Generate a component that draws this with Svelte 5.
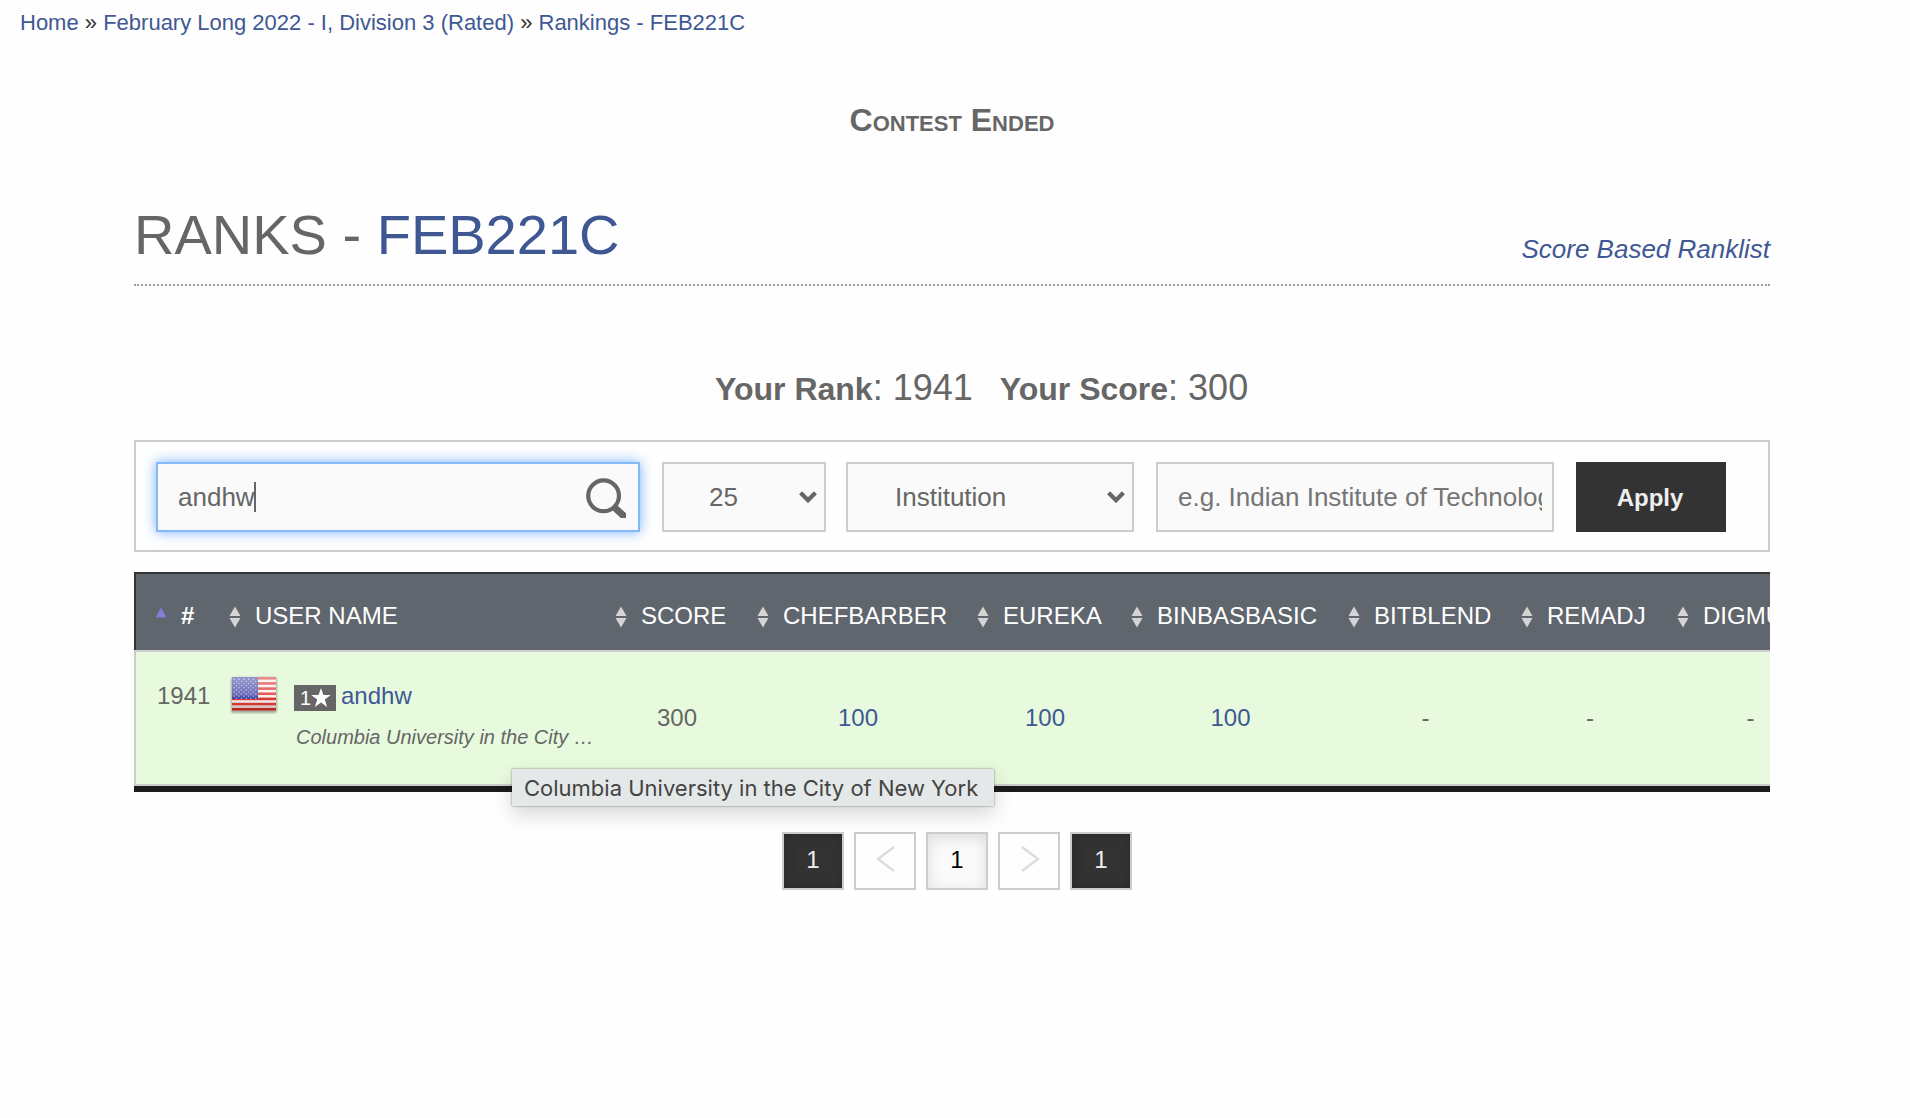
<script>
  const columns = [
    { name: 'SCORE', value: '300', link: false },
    { name: 'CHEFBARBER', value: '100', link: true },
    { name: 'EUREKA', value: '100', link: true },
    { name: 'BINBASBASIC', value: '100', link: true },
    { name: 'BITBLEND', value: '-', link: false },
    { name: 'REMADJ', value: '-', link: false },
    { name: 'DIGMULK', value: '-', link: false },
  ];
  const stripes = [0, 2, 4, 6, 8, 10, 12];
  const stars = Array.from({ length: 50 }, (_, i) => ({ x: 4.2 + (i % 10) * 2.4, y: 3.4 + Math.floor(i / 10) * 4.2 + (i % 2) * 2.1 }));
</script>

{#snippet sorter()}
  <svg class="sorter" width="12" height="22" viewBox="0 0 12 22">
    <path d="M6 0.5 11.5 10H.5ZM.5 12h11L6 21.5Z" fill="#d4d4d4" />
  </svg>
{/snippet}

{#snippet chevron()}
  <svg class="chevron" width="18" height="12" viewBox="0 0 18 12">
    <path d="M1.6 1.8 9 9.2l7.4-7.4" fill="none" stroke="#666" stroke-width="4.2" />
  </svg>
{/snippet}

<nav class="crumbs">
  <a href="#home">Home</a> » <a href="#contest">February Long 2022 - I, Division 3 (Rated)</a> » <a href="#ranks">Rankings - FEB221C</a>
</nav>

<main>
  <h3>Contest Ended</h3>

  <header>
    <h1>RANKS - <a href="#contest">FEB221C</a></h1>
    <a class="alt" href="#score">Score Based Ranklist</a>
  </header>

  <div class="mine">
    <span><b>Your Rank</b><span class="num">: 1941</span></span>
    <span><b>Your Score</b><span class="num">: 300</span></span>
  </div>

  <form class="filters">
    <div class="field search">
      <span>andhw</span><i class="caret"></i>
      <svg class="lens" width="40" height="40" viewBox="0 0 40 40">
        <circle cx="17.6" cy="17.8" r="15.4" fill="none" stroke="#666" stroke-width="4.2" />
        <path d="M28 29 41 41" stroke="#666" stroke-width="7" />
      </svg>
    </div>
    <div class="field count"><span>25</span>{@render chevron()}</div>
    <div class="field kind"><span>Institution</span>{@render chevron()}</div>
    <div class="field place"><span>e.g. Indian Institute of Technology</span></div>
    <button type="button">Apply</button>
  </form>

  <div class="table">
    <div class="row head">
      <div class="first">
        <svg width="12" height="11" viewBox="0 0 12 11"><path d="M6 .5 11.5 10.5H.5Z" fill="#8080d8" /></svg>
        <b>#</b>
      </div>
      <div>{@render sorter()}USER NAME</div>
      {#each columns as c}
        <div>{@render sorter()}{c.name}</div>
      {/each}
    </div>
    <div class="row body">
      <div class="rank">1941</div>
      <div class="user">
        <svg class="flag" width="48" height="38" viewBox="0 0 48 38">
          <defs>
            <linearGradient id="gloss" x1="0" y1="0" x2="0" y2="1">
              <stop offset="0" stop-color="#fff" stop-opacity=".45" />
              <stop offset=".55" stop-color="#fff" stop-opacity=".2" />
              <stop offset=".6" stop-color="#fff" stop-opacity="0" />
              <stop offset="1" stop-color="#300" stop-opacity=".3" />
            </linearGradient>
          </defs>
          <rect class="shade" x="1" y="1.500" width="46" height="35.500" rx="2" />
          <rect x="2" y="1" width="44" height="33.500" fill="#f7eeee" />
          {#each stripes as s}
            <rect x="2" y={1 + s * 2.577} width="44" height="2.577" fill="#dc2f27" />
          {/each}
          <rect x="2" y="1" width="26" height="22" fill="#4346a6" />
          {#each stars as s}
            <circle cx={s.x} cy={s.y} r="0.8" fill="#a9abdc" />
          {/each}
          <rect x="2" y="1" width="44" height="33.500" fill="url(#gloss)" />
        </svg>
        <div class="who">
          <div class="handle">
            <span class="badge">1<svg width="20" height="20" viewBox="0 0 20 20"><path d="m10 0 2.4 7.1h7.4l-6 4.5 2.3 7.4-6.1-4.5L3.900 19l2.300-7.400-6-4.500h7.400Z" fill="#fff" /></svg></span>
            <a href="#andhw">andhw</a>
          </div>
          <div class="school">Columbia University in the City …</div>
        </div>
      </div>
      {#each columns as c}
        <div class="val">{#if c.link}<a href="#solution">{c.value}</a>{:else}{c.value}{/if}</div>
      {/each}
    </div>
    <div class="tip">Columbia University in the City of New York</div>
  </div>

  <div class="pager">
    <span class="dark">1</span>
    <span><svg width="20" height="28" viewBox="0 0 20 28"><path d="M18 2 2 14l16 12" fill="none" stroke="#dcdcdc" stroke-width="2.4" /></svg></span>
    <span class="now">1</span>
    <span><svg width="20" height="28" viewBox="0 0 20 28"><path d="m2 2 16 12L2 26" fill="none" stroke="#dcdcdc" stroke-width="2.400" /></svg></span>
    <span class="dark">1</span>
  </div>
</main>

<style>
  :global(body) {
    background: #fefefe;
    color: #666;
    font: 24px/28px "Liberation Sans", Arial, sans-serif;
    overflow: hidden;
  }
  a { color: #3f5894; text-decoration: none; }
  .crumbs { padding: 9px 20px 0; font-size: 22px; line-height: 28px; color: #333; white-space: nowrap; }
  main { width: 1636px; margin-left: 134px; }
  h3 { margin: 0; padding-top: 64px; font: bold 32px/38px "Liberation Sans", Arial, sans-serif; font-variant: small-caps; text-align: center; }
  header { display: flex; justify-content: space-between; align-items: flex-end; height: 145px; border-bottom: 2px dotted #999; }
  h1 { margin: 0 0 17px; font-weight: normal; font-size: 56px; line-height: 64px; }
  .alt { font-size: 26px; line-height: 30px; font-style: italic; margin-bottom: 20px; }
  .mine { display: flex; gap: 27px; padding: 80px 0 0 581px; height: 74px; font-size: 32px; line-height: 44px; white-space: nowrap; }
  .num { font-size: 36px; }
  .filters { display: flex; box-sizing: border-box; height: 112px; padding: 20px; border: 2px solid #ccc; }
  .field { display: flex; align-items: center; box-sizing: border-box; height: 70px; padding-left: 20px; border: 2px solid #ccc; background: #fafafa; font-size: 26px; white-space: nowrap; }
  .search { width: 484px; margin-right: 22px; border-color: #83b9f9; box-shadow: 0 0 12px #78b0ff; }
  .caret { width: 2px; height: 30px; margin-left: -1px; background: #666; }
  .lens { margin: 2px 12px 0 auto; }
  .count { width: 164px; padding-left: 45px; margin-right: 20px; }
  .kind { width: 288px; padding-left: 47px; margin-right: 22px; }
  .chevron { margin: 0 7px 0 auto; }
  .place { width: 398px; padding-right: 10px; color: #757575; }
  .place span { overflow: hidden; }
  button { width: 150px; height: 70px; margin-left: 22px; padding: 1px 2px 0 0; border: 0; background: #333; color: #eee; font: bold 24px "Liberation Sans", Arial, sans-serif; }
  .table { position: relative; margin-top: 20px; border-bottom: 6px solid #1b1b1d; }
  .row { display: grid; box-sizing: border-box; grid-template-columns: 84px 386px 142px 220px 154px 217px 173px 156px 165px; overflow: hidden; white-space: nowrap; }
  .head { height: 78px; border: solid #333; border-width: 2px 0 0 2px; background: #5f666d; color: #fff; }
  .head > div { display: flex; align-items: center; padding: 8px 0 0 9px; }
  .sorter { margin: 1px 14px 0 0; }
  .head > .first { padding-left: 19px; gap: 14px; }
  .first svg { margin-top: -8px; }
  .body { height: 136px; border: solid #ccc; border-width: 2px 0 2px 2px; background: #e7fadd; }
  .rank { padding: 30px 0 0 21px; }
  .user { display: flex; padding: 24px 0 0 10px; }
  .who { margin-left: 16px; }
  .handle { display: flex; align-items: center; gap: 5px; height: 40px; }
  .badge { display: flex; align-items: center; box-sizing: border-box; width: 42px; height: 26px; margin-top: 3px; padding-left: 6px; background: #666; color: #fff; font-size: 20px; }
  .school { margin-left: 2px; font-size: 20px; line-height: 42px; font-style: italic; }
  .val { text-align: center; padding-top: 52px; }
  .shade { fill: #000; opacity: .3; filter: blur(1px); }
  .tip { position: absolute; left: 378px; top: 197px; box-sizing: border-box; width: 482px; height: 37px; padding-left: 12px; background: #e4e8e8; color: #444; font: 22px/38px Inter, sans-serif; white-space: nowrap; box-shadow: 0 0 2px rgba(0,0,0,.45), 0 8px 20px rgba(0,0,0,.16); }
  .pager { display: flex; gap: 10px; padding: 40px 0 0 648px; }
  .pager span { display: flex; align-items: center; justify-content: center; box-sizing: border-box; width: 62px; height: 58px; padding-bottom: 2px; border: 2px solid #ccc; background: #fefefe; }
  .pager svg { margin: -3px 0 0 2px; }
  .pager .dark { background: #333; color: #eee; box-shadow: inset 0 0 12px #2a2a2a; }
  .pager .now { color: #000; background: #fafafa; box-shadow: inset 0 4px 14px #ddd; }
</style>
